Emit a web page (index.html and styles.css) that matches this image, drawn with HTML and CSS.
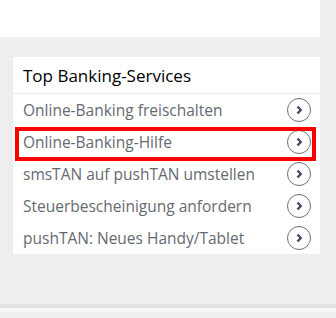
FILE: index.html
```html
<!DOCTYPE html>
<html lang="de">
<head>
  <meta charset="UTF-8" />
  <meta name="viewport" content="width=device-width, initial-scale=1.0" />
  <title>Top Banking-Services</title>
  <link rel="stylesheet" href="styles.css">
</head>
<body>
  <div class="page">
    <div class="top-panel"></div>

    <div class="services">
      <h2 class="services-title">Top Banking-Services</h2>
      <ul class="services-list">
        <li class="service-item">
          <a href="#">Online-Banking freischalten</a>
          <span class="arrow-btn"><svg viewBox="0 0 24 24" width="24" height="24"><circle cx="12" cy="12" r="11.5" fill="none" stroke="#707070" stroke-width="1"/><path d="M10.5 8.5 L13.8 12 L10.5 15.5" fill="none" stroke="#3f4a5a" stroke-width="2.3"/></svg></span>
        </li>
        <li class="service-item">
          <a href="#">Online-Banking-Hilfe</a>
          <span class="arrow-btn"><svg viewBox="0 0 24 24" width="24" height="24"><circle cx="12" cy="12" r="11.5" fill="none" stroke="#707070" stroke-width="1"/><path d="M10.5 8.5 L13.8 12 L10.5 15.5" fill="none" stroke="#3f4a5a" stroke-width="2.3"/></svg></span>
          <span class="marker"></span>
        </li>
        <li class="service-item">
          <a href="#">smsTAN auf pushTAN umstellen</a>
          <span class="arrow-btn"><svg viewBox="0 0 24 24" width="24" height="24"><circle cx="12" cy="12" r="11.5" fill="none" stroke="#707070" stroke-width="1"/><path d="M10.5 8.5 L13.8 12 L10.5 15.5" fill="none" stroke="#3f4a5a" stroke-width="2.3"/></svg></span>
        </li>
        <li class="service-item">
          <a href="#">Steuerbescheinigung anfordern</a>
          <span class="arrow-btn"><svg viewBox="0 0 24 24" width="24" height="24"><circle cx="12" cy="12" r="11.5" fill="none" stroke="#707070" stroke-width="1"/><path d="M10.5 8.5 L13.8 12 L10.5 15.5" fill="none" stroke="#3f4a5a" stroke-width="2.3"/></svg></span>
        </li>
        <li class="service-item">
          <a href="#">pushTAN: Neues Handy/Tablet</a>
          <span class="arrow-btn"><svg viewBox="0 0 24 24" width="24" height="24"><circle cx="12" cy="12" r="11.5" fill="none" stroke="#707070" stroke-width="1"/><path d="M10.5 8.5 L13.8 12 L10.5 15.5" fill="none" stroke="#3f4a5a" stroke-width="2.3"/></svg></span>
        </li>
      </ul>
    </div>

    <div class="footer-edge"></div>
  </div>
</body>
</html>
```

FILE: styles.css
```css
* {
  box-sizing: border-box;
  margin: 0;
  padding: 0;
}

body {
  font-family: 'Open Sans', 'Noto Sans', sans-serif;
  background: #eeeeee;
  min-height: 100vh;
  overflow: hidden;
}

.page {
  width: 320px;
}

.top-panel {
  height: 37px;
  background: #fff;
}

.services {
  background: #fff;
  margin: 20px 0 0 13px;
}

.services-title {
  font-size: 17px;
  font-weight: 500;
  color: #000;
  height: 37px;
  line-height: 36px;
  padding: 1px 10px 0;
  border-bottom: 1px solid #ececec;
}

.services-list {
  list-style: none;
}

.service-item {
  position: relative;
  display: flex;
  align-items: center;
  justify-content: space-between;
  height: 32px;
  padding: 0 10px;
}

.service-item a {
  color: #666a70;
  font-size: 15.5px;
  text-decoration: none;
}

.arrow-btn {
  display: flex;
  flex-shrink: 0;
  width: 24px;
  height: 24px;
  margin-right: -1px;
}

.marker {
  position: absolute;
  top: 1px;
  left: 2px;
  width: 301px;
  height: 34px;
  border: 4px solid #f00;
}

.footer-edge {
  margin-top: 50px;
  width: 336px;
  height: 8px;
  border-top: 4px solid #e2e2e2;
  background: #f7f7f7;
}
```
